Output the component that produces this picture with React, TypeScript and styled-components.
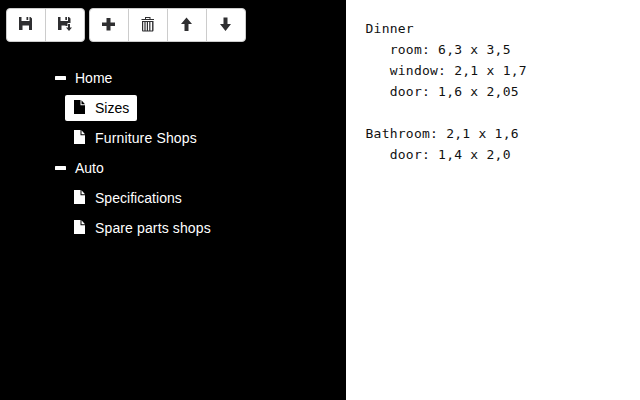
import React from "react";
import styled, { createGlobalStyle } from "styled-components";

const GlobalStyle = createGlobalStyle`
  body { margin: 0; background: #fff; }
  * { box-sizing: border-box; }
`;

const Layout = styled.div`
  display: flex;
  width: 640px;
  height: 400px;
  overflow: hidden;
  font-family: "Helvetica Neue", "Liberation Sans", Arial, sans-serif;
  font-size: 14px;
`;

const Sidebar = styled.aside`
  width: 346px;
  padding: 8px 6px;
  background: #000;
  color: #fff;
`;

const Toolbar = styled.div`
  display: flex;
  gap: 4px;
`;

const ButtonGroup = styled.div`
  display: flex;
`;

const ToolButton = styled.button`
  display: flex;
  align-items: center;
  justify-content: center;
  width: 40px;
  height: 34px;
  padding: 0 0 1px;
  border: 1px solid #ccc;
  background: #fff;
  color: #2f2f31;

  & + & { margin-left: -1px; }
  &:first-child { border-radius: 4px 0 0 4px; }
  &:last-child { border-radius: 0 4px 4px 0; }
`;

const Tree = styled.ul`
  margin: 21px 0 0 44px;
  padding: 0;
  list-style: none;
`;

const Leaves = styled.ul`
  margin: 0;
  padding: 0 0 0 15px;
  list-style: none;
`;

const Row = styled.div`
  display: flex;
  align-items: center;
  height: 30px;
`;

const Label = styled.div<{ $active?: boolean }>`
  display: flex;
  align-items: center;
  height: 26px;
  padding: 0 8px 0 9px;
  border-radius: 2px;
  background: ${(p) => (p.$active ? "#fff" : "transparent")};
  color: ${(p) => (p.$active ? "#000" : "#fff")};
  white-space: nowrap;
`;

const BranchLabel = styled(Label)`
  padding: 0 5px;
`;

const Caption = styled.span<{ $gap: number; $tracking?: number }>`
  margin-left: ${(p) => p.$gap}px;
  line-height: 20px;
  letter-spacing: ${(p) => p.$tracking ?? 0}px;
`;

const Note = styled.pre`
  flex: 1;
  margin: 0;
  padding: 18px 19.5px;
  background: #fff;
  color: #111;
  font-family: Consolas, "DejaVu Sans Mono", monospace;
  font-size: 13px;
  letter-spacing: 0.24px;
  line-height: 21px;
`;

const Glyph = styled.svg`
  display: block;
  flex: none;
  fill: currentColor;
`;

const FileGlyph = styled(Glyph)`
  margin-bottom: 1px;
`;

const icons = {
  save: <path d="M0 0H2.500V4H10.500V0H11.500L13 1.500V13H10V8.500H3.500V13H0zM7.500 0h1.700v3H7.500z" />,
  saveAs: <path d="M0 0H2.500V4H10V0H11L12.500 1.500V6H9.500v3H7.500V8.500H3.500V13H0zM7.300 0H9v3H7.300zM10 7h2v3.500h2L11 14 8 10.500h2z" />,
  plus: <path d="M4.500 1h4v4.500H13V9H8.500v4.500h-4V9H0V5.500h4.500z" />,
  trash: (
    <path
      fillRule="evenodd"
      d="M4 0h5.500v2H13v1H.5V2H4zM5 1v1h3.500V1zM1 4h11.500v9.500L12 14.500H1.500L1 13.500zM2.200 5v8.400h1.200V5zM4.600 5v8.400h1.200V5zM7 5v8.400h1.200V5zM9.400 5v8.400h1.700V5z"
    />
  ),
  up: <path d="M6.500 0.500L12 7H8.500V14h-4V7H1z" />,
  down: <path d="M4.500 .5h4v6.500H12L6.500 14 1 7h3.500z" />,
};

type IconName = keyof typeof icons;

const ToolIcon = ({ name }: { name: IconName }) => (
  <Glyph width="14" height="15" viewBox="0 0 14 15">
    {icons[name]}
  </Glyph>
);

const FileIcon = () => (
  <FileGlyph width="11" height="15" viewBox="0 0 11 15">
    <path d="M0 0h6.500v5.300H11V14H0zM7.500 .2l3.500 4H7.500z" />
  </FileGlyph>
);

const MinusIcon = () => (
  <Glyph width="11" height="4" viewBox="0 0 11 4">
    <rect width="11" height="4" rx=".6" />
  </Glyph>
);

const toolGroups: { name: IconName; title: string }[][] = [
  [
    { name: "save", title: "Save" },
    { name: "saveAs", title: "Save as" },
  ],
  [
    { name: "plus", title: "Add" },
    { name: "trash", title: "Delete" },
    { name: "up", title: "Move up" },
    { name: "down", title: "Move down" },
  ],
];

const branches = [
  {
    title: "Home",
    pages: [
      { title: "Sizes", tracking: 0 },
      { title: "Furniture Shops", tracking: 0.15 },
    ],
  },
  {
    title: "Auto",
    pages: [
      { title: "Specifications", tracking: 0.03 },
      { title: "Spare parts shops", tracking: 0.13 },
    ],
  },
];

const note = `Dinner
   room: 6,3 x 3,5
   window: 2,1 x 1,7
   door: 1,6 x 2,05

Bathroom: 2,1 x 1,6
   door: 1,4 x 2,0`;

export default function App() {
  return (
    <>
      <GlobalStyle />
      <Layout>
        <Sidebar>
          <Toolbar>
            {toolGroups.map((group, i) => (
              <ButtonGroup key={i}>
                {group.map((tool) => (
                  <ToolButton key={tool.name} aria-label={tool.title}>
                    <ToolIcon name={tool.name} />
                  </ToolButton>
                ))}
              </ButtonGroup>
            ))}
          </Toolbar>
          <Tree>
            {branches.map((branch) => (
              <li key={branch.title}>
                <Row>
                  <BranchLabel>
                    <MinusIcon />
                    <Caption $gap={9}>{branch.title}</Caption>
                  </BranchLabel>
                </Row>
                <Leaves>
                  {branch.pages.map((page) => (
                    <Row key={page.title}>
                      <Label $active={page.title === "Sizes"}>
                        <FileIcon />
                        <Caption $gap={10} $tracking={page.tracking}>
                          {page.title}
                        </Caption>
                      </Label>
                    </Row>
                  ))}
                </Leaves>
              </li>
            ))}
          </Tree>
        </Sidebar>
        <Note>{note}</Note>
      </Layout>
    </>
  );
}
